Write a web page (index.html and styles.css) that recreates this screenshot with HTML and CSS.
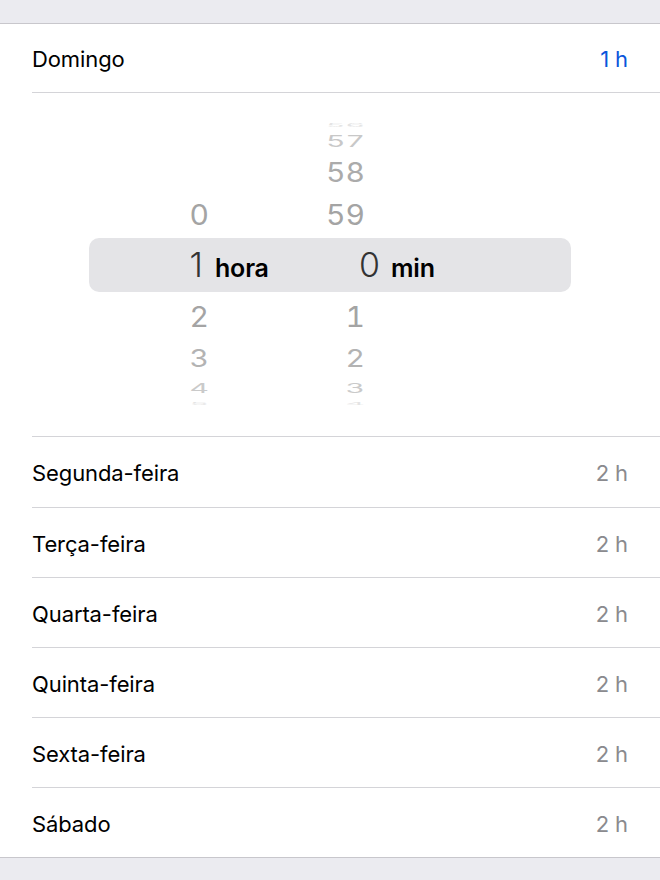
FILE: index.html
```html
<!DOCTYPE html>
<html lang="pt">
<head>
<meta charset="utf-8">
<title>Horários</title>
<link rel="stylesheet" href="styles.css">
</head>
<body>
<div class="screen">
  <div class="gap-top"></div>
  <div class="group">
    <div class="row row-first">
      <span class="label">Domingo</span>
      <span class="value value-active">1 h</span>
    </div>
    <div class="picker">
      <div class="wheel wheel-above">
        <div class="wrow w4"><span class="h"></span><span class="m">56</span></div>
        <div class="wrow w3"><span class="h"></span><span class="m">57</span></div>
        <div class="wrow w2"><span class="h"></span><span class="m">58</span></div>
        <div class="wrow w1"><span class="h">0</span><span class="m">59</span></div>
      </div>
      <div class="selection">
        <div class="sel-cell sel-hours"><span class="sel-num">1</span><span class="sel-unit">hora</span></div>
        <div class="sel-cell sel-mins"><span class="sel-num">0</span><span class="sel-unit">min</span></div>
      </div>
      <div class="wheel wheel-below">
        <div class="wrow b1"><span class="h">2</span><span class="m">1</span></div>
        <div class="wrow b2"><span class="h">3</span><span class="m">2</span></div>
        <div class="wrow b3"><span class="h">4</span><span class="m">3</span></div>
        <div class="wrow b4"><span class="h">5</span><span class="m">4</span></div>
      </div>
    </div>
    <div class="row row-after-picker"><span class="label">Segunda-feira</span><span class="value">2 h</span></div>
    <div class="row"><span class="label">Terça-feira</span><span class="value">2 h</span></div>
    <div class="row"><span class="label">Quarta-feira</span><span class="value">2 h</span></div>
    <div class="row"><span class="label">Quinta-feira</span><span class="value">2 h</span></div>
    <div class="row"><span class="label">Sexta-feira</span><span class="value">2 h</span></div>
    <div class="row row-last"><span class="label">Sábado</span><span class="value">2 h</span></div>
  </div>
  <div class="gap-bottom"></div>
</div>
</body>
</html>
```
FILE: styles.css
```css
* { box-sizing: border-box; }
html, body {
  margin: 0;
  padding: 0;
  background: #ebebf0;
}
body {
  font-family: "Inter", "Noto Sans", "Liberation Sans", sans-serif;
  color: #000;
  width: 660px;
  height: 880px;
  overflow: hidden;
}
.screen {
  display: flex;
  flex-direction: column;
}
.gap-top { height: 23px; }
.group {
  background: #fff;
  border-top: 1px solid #c8c7cc;
  border-bottom: 1px solid #c8c7cc;
}
.row {
  height: 70px;
  margin-left: 32px;
  padding: 2px 32px 0 0;
  display: flex;
  align-items: center;
  justify-content: space-between;
  border-bottom: 1px solid #d4d4d8;
  font-size: 22px;
  letter-spacing: -0.1px;
}
.row-first { height: 69px; }
.row-after-picker { height: 71px; }
.row-last { border-bottom: none; height: 69px; }
.label { color: #000; }
.value { color: #8a8a8e; }
.value-active { color: #0a55db; }

.picker {
  margin-left: 32px;
  border-bottom: 1px solid #d4d4d8;
  padding: 27px 0 29px;
  display: flex;
  flex-direction: column;
}
.wheel {
  margin-left: -32px;
  display: flex;
  flex-direction: column;
}
.wrow {
  display: flex;
  font-size: 30px;
  font-variant-numeric: tabular-nums;
  transform-origin: 50% 50%;
}
.wrow .h { width: 209px; text-align: right; }
.wrow .m { width: 156px; text-align: right; }

.w4 { height: 10px; line-height: 10px; transform: scaleY(0.14); color: #e4e4e4; }
.w3 { height: 23px; line-height: 23px; transform: scaleY(0.51); color: #c8c8c8; }
.w2 { height: 39px; line-height: 39px; transform: scaleY(0.88); color: #ababab; }
.w1 { height: 46px; line-height: 46px; transform: scaleY(0.93); color: #a4a4a4; }
.b1 { height: 50px; line-height: 50px; transform: scaleY(0.93); color: #a4a4a4; }
.b2 { height: 33px; line-height: 33px; transform: scaleY(0.79); color: #b3b3b3; }
.b3 { height: 26px; line-height: 26px; transform: scaleY(0.42); color: #cacaca; }
.b4 { height: 6px; line-height: 6px; transform: scaleY(0.11); color: #e4e4e4; }

.selection {
  height: 54px;
  margin: 0 89px 0 57px;
  background: #e4e4e7;
  border-radius: 10px;
  display: flex;
  align-items: center;
}
.sel-cell {
  display: flex;
  align-items: baseline;
}
.sel-hours { width: 181px; }
.sel-hours .sel-num { width: 114px; }
.sel-mins .sel-num { width: 110px; }
.sel-num {
  font-size: 34px;
  font-weight: 300;
  color: #333;
  text-align: right;
  line-height: 54px;
}
.sel-unit {
  font-size: 25px;
  font-weight: 600;
  color: #000;
  margin-left: 12px;
  letter-spacing: -0.2px;
}
.sel-mins .sel-unit { margin-left: 11px; }
.gap-bottom { flex: 1; }
```
